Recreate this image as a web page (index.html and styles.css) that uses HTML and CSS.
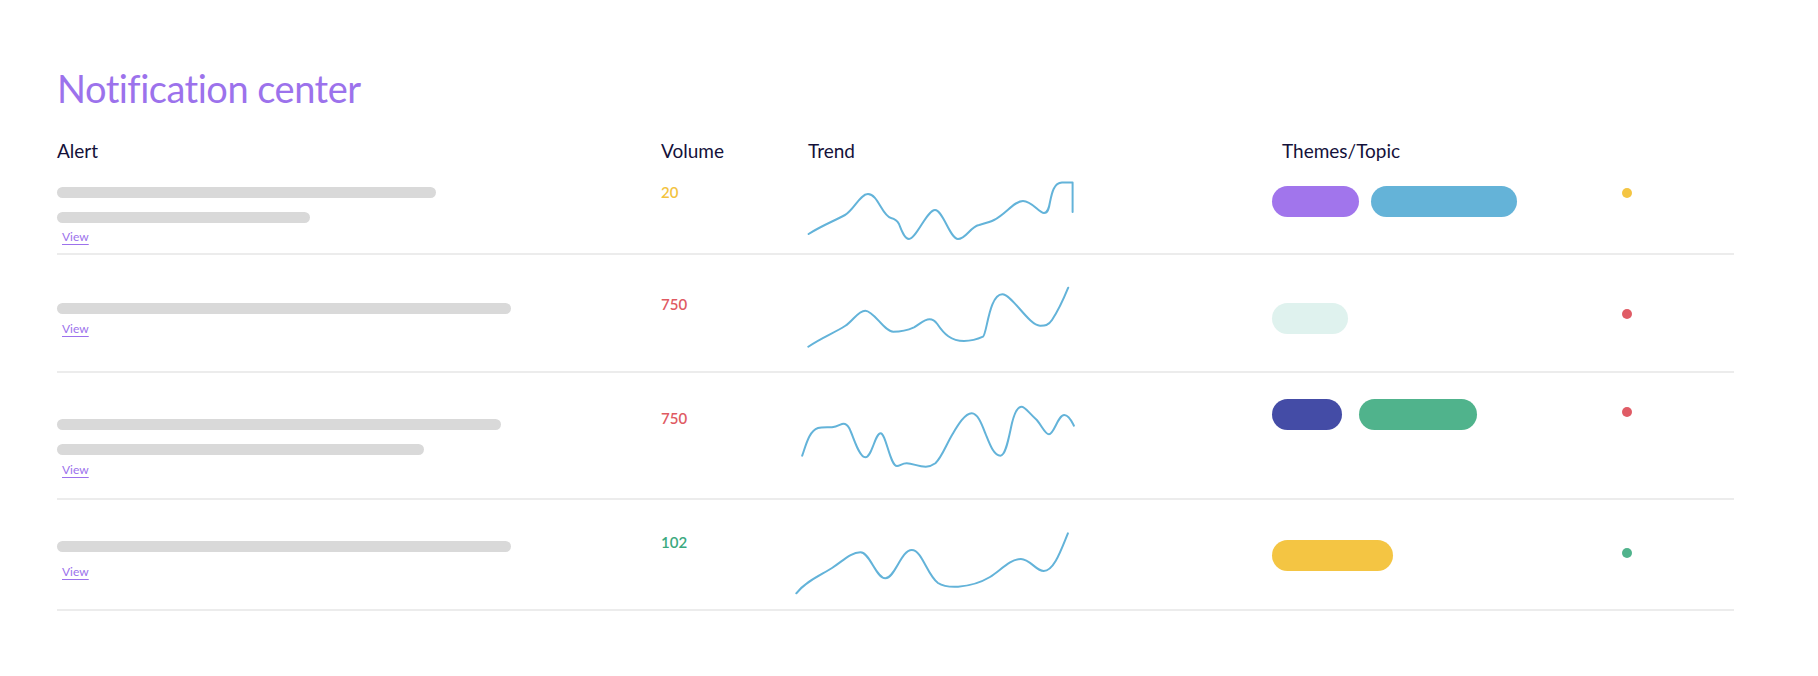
FILE: index.html
```html
<!DOCTYPE html>
<html lang="en">
<head>
    <meta charset="UTF-8">
    <meta name="viewport" content="width=device-width, initial-scale=1.0">
    <title>Notification center</title>
    <link rel="stylesheet" href="styles.css">
</head>
<body>
    <div class="page">
        <h1 class="title">Notification center</h1>

        <div class="table">
            <div class="table-head">
                <div>Alert</div>
                <div>Volume</div>
                <div class="head-trend">Trend</div>
                <div class="head-themes">Themes/Topic</div>
                <div></div>
            </div>

            <!-- row 1 -->
            <div class="row row-1">
                <div class="alert">
                    <span class="skeleton" style="width: 379px"></span>
                    <span class="skeleton" style="width: 253px"></span>
                    <a href="#" class="view">View</a>
                </div>
                <div class="volume volume-low">20</div>
                <div class="trend">
                    <svg class="spark" width="280" height="70" viewBox="0 0 280 70">
                        <path d="M12.6,56 C25,48 38,43 49,37 C58,32 64,16 72,16 C82,16 86,38 95,40 C99,41 101,42 103,46 C106,54 109,61 113,61 C120,61 131,32 139,32 C147,32 154,61 162,61 C170,61 174,49 183,47 C190,45 194,44 198,42 C210,36 218,23 227,23 C236,23 243,35 248,35 C252,35 253,30 254,24 C256,14 258,5 266,4.5 L276.6,4.5 L276.6,34"/>
                    </svg>
                </div>
                <div class="themes">
                    <span class="pill pill-purple" style="width: 87px"></span>
                    <span class="pill pill-blue" style="width: 146px"></span>
                </div>
                <div class="status"><span class="dot dot-yellow"></span></div>
            </div>

            <!-- row 2 -->
            <div class="row row-2">
                <div class="alert">
                    <span class="skeleton" style="width: 454px"></span>
                    <a href="#" class="view">View</a>
                </div>
                <div class="volume volume-high">750</div>
                <div class="trend">
                    <svg class="spark" width="280" height="70" viewBox="0 0 280 70">
                        <path d="M12.3,62.7 C25,54 38,49 49,42 C57,37 62,26.7 69.3,26.7 C78,26.7 88,47.7 97.3,47.7 C104,47.7 112,46 118,43.3 C124,40 128,35.3 133.6,35.3 C137,35.3 139,37 141.3,40 C148,50 155,57 168,57 C176,57 182,55 187,52.7 C191,50 193,10.3 206.3,10.3 C216,10.3 233,41.7 244,41.7 C248.4,41.7 252,42 256,36 C262,27 268,14 272.2,3.7"/>
                    </svg>
                </div>
                <div class="themes">
                    <span class="pill pill-mint" style="width: 76px"></span>
                </div>
                <div class="status"><span class="dot dot-red"></span></div>
            </div>

            <!-- row 3 -->
            <div class="row row-3">
                <div class="alert">
                    <span class="skeleton" style="width: 444px"></span>
                    <span class="skeleton" style="width: 367px"></span>
                    <a href="#" class="view">View</a>
                </div>
                <div class="volume volume-high">750</div>
                <div class="trend">
                    <svg class="spark" width="280" height="70" viewBox="0 0 280 70">
                        <path d="M6.2,52.7 C10,42 13,28 22,25 C26,24 32,24.5 36,24.3 C42,23.5 45,20.7 47.5,20.7 C50,20.7 52,23 53.3,25.3 C58,35 63,54.3 69.3,54.3 C76,54.3 79,30.3 84.6,30.3 C90,30.3 94,63 101,63 C104,63 106,60.3 110.7,60.3 C117,60.3 122,63.7 129.8,63.7 C134,63.7 137,62 139.4,60.3 C146,54 150,42 156.6,31 C162,22 169,10.3 175.7,10.3 C182,10.3 186,22 190,32 C194,42 198,52.7 204.4,52.7 C210,52.7 213,33 216,20 C219,8 222,3.7 225.5,3.7 C229,3.7 232,9 240.8,17 C246,23 249,31.3 253,31.3 C258,31.3 262,12 268.3,12 C273,12 276,19 277.9,22.7"/>
                    </svg>
                </div>
                <div class="themes themes-wide">
                    <span class="pill pill-navy" style="width: 70px"></span>
                    <span class="pill pill-green" style="width: 118px"></span>
                </div>
                <div class="status"><span class="dot dot-red"></span></div>
            </div>

            <!-- row 4 -->
            <div class="row row-4">
                <div class="alert">
                    <span class="skeleton" style="width: 454px"></span>
                    <a href="#" class="view">View</a>
                </div>
                <div class="volume volume-mid">102</div>
                <div class="trend">
                    <svg class="spark" width="280" height="70" viewBox="0 0 280 70">
                        <path d="M0.3,63.3 C10,51 25,45 36,38 C48,30 55,22.3 64.4,22.3 C74,22.3 80,48.3 89.4,48.3 C99,48.3 105,20 115.8,20 C126,20 131,45 142,53 C148,57 156,57 162.1,56.7 C172,56 184,53 194,47 C204,41 214,29 224.9,29 C234,29 240,41 247.7,41 C258,41 265,20 271.9,3.3"/>
                    </svg>
                </div>
                <div class="themes">
                    <span class="pill pill-yellow" style="width: 121px"></span>
                </div>
                <div class="status"><span class="dot dot-green"></span></div>
            </div>
        </div>
    </div>
</body>
</html>
```

FILE: styles.css
```css
body {
    margin: 0;
    background: #ffffff;
    font-family: 'Lato', 'Open Sans', sans-serif;
    color: #14113a;
}
.page {
    padding: 65px 0 0 57px;
}
.title {
    margin: 0;
    font-size: 38px;
    line-height: 46px;
    font-weight: 400;
    letter-spacing: -0.5px;
    color: #9c72ec;
}
.table {
    width: 1677px;
    margin-top: 28px;
}
.table-head,
.row {
    display: grid;
    grid-template-columns: 604px 135px 476px 350px 112px;
    align-items: start;
}
.table-head {
    height: 25px;
    font-size: 19px;
    line-height: 24px;
}
.head-trend {
    padding-left: 12px;
}
.head-themes {
    padding-left: 10px;
}
.row {
    box-sizing: border-box;
    border-bottom: 2px solid #ececec;
}
.row-1 { height: 91px; }
.row-2 { height: 118px; }
.row-3 { height: 127px; }
.row-4 { height: 111px; }

/* alert column */
.alert {
    display: flex;
    flex-direction: column;
    align-items: flex-start;
}
.skeleton {
    display: block;
    height: 11px;
    border-radius: 6px;
    background: #d9d9d9;
}
.skeleton + .skeleton {
    margin-top: 14px;
}
.view {
    margin-left: 5px;
    font-size: 12px;
    line-height: 14px;
    color: #9c72ec;
    text-decoration: underline;
    text-decoration-thickness: 1px;
    text-underline-offset: 3px;
}

/* volume column */
.volume {
    font-size: 15px;
    line-height: 17px;
    font-weight: 600;
}
.volume-low { color: #f3c33f; }
.volume-high { color: #e05a62; }
.volume-mid { color: #3aa97e; }

/* trend column */
.spark {
    display: block;
    overflow: visible;
}
.spark path {
    fill: none;
    stroke: #63b3d9;
    stroke-width: 2;
    stroke-linecap: round;
    stroke-linejoin: round;
}

/* themes column */
.themes {
    display: flex;
    gap: 12px;
}
.themes-wide {
    gap: 17px;
}
.pill {
    display: block;
    height: 31px;
    border-radius: 16px;
}
.pill-purple { background: #a175ec; }
.pill-blue { background: #64b3d8; }
.pill-mint { background: #dff2ee; }
.pill-navy { background: #444ca6; }
.pill-green { background: #50b38c; }
.pill-yellow { background: #f4c543; }

/* status dot */
.dot {
    display: block;
    width: 10px;
    height: 10px;
    border-radius: 50%;
}
.dot-yellow { background: #f4c543; }
.dot-red { background: #e05c66; }
.dot-green { background: #50b38c; }

/* per-row offsets */
.row-1 .alert { padding-top: 23px; }
.row-1 .view { margin-top: 7px; }
.row-1 .volume { padding-top: 20px; }
.row-1 .trend { padding-top: 14px; }
.row-1 .themes { padding-top: 22px; }
.row-1 .status { padding-top: 24px; }

.row-2 .alert { padding-top: 48px; }
.row-2 .view { margin-top: 8px; }
.row-2 .volume { padding-top: 41px; }
.row-2 .trend { padding-top: 29px; }
.row-2 .themes { padding-top: 48px; }
.row-2 .status { padding-top: 54px; }

.row-3 .alert { padding-top: 46px; }
.row-3 .view { margin-top: 8px; }
.row-3 .volume { padding-top: 37px; }
.row-3 .trend { padding-top: 30px; }
.row-3 .themes { padding-top: 26px; }
.row-3 .status { padding-top: 34px; }

.row-4 .alert { padding-top: 41px; }
.row-4 .view { margin-top: 13px; }
.row-4 .volume { padding-top: 34px; }
.row-4 .trend { padding-top: 30px; }
.row-4 .themes { padding-top: 40px; }
.row-4 .status { padding-top: 48px; }
```
